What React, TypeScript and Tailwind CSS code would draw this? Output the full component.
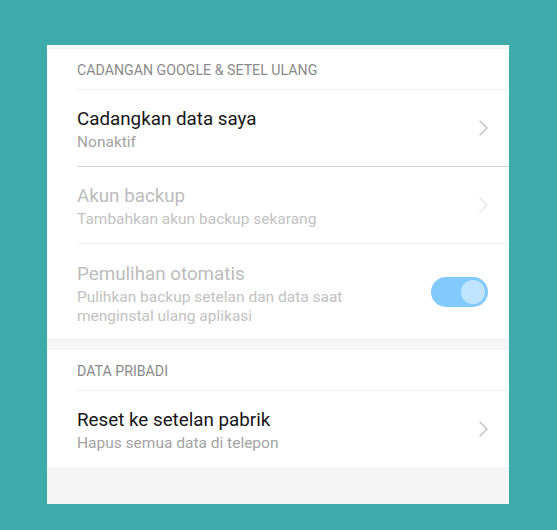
import React from "react";

function Chevron({ faded }: { faded?: boolean }) {
  return (
    <svg width="9" height="16" viewBox="0 0 9 16" fill="none" className={faded ? "text-[#e6e6e6]" : "text-[#bdbdbd]"}>
      <path d="M1 1l7 7-7 7" stroke="currentColor" strokeWidth={1.3} strokeLinecap="round" strokeLinejoin="round" />
    </svg>
  );
}

function Header({ label }: { label: string }) {
  return (
    <div className="h-[40px] flex items-center pt-[4px] text-[14.2px] text-[#8a8a8a]">{label}</div>
  );
}

function Row({ title, subtitle, disabled, className }: { title: string; subtitle: string; disabled?: boolean; className?: string }) {
  return (
    <div className={`flex items-center pr-[21px] ${className ?? ""}`}>
      <div className="flex-1 flex flex-col pt-[6px]">
        <span className={`text-[18.8px] leading-[22px] ${disabled ? "text-[#bcbcbc]" : "text-[#161616]"}`}>{title}</span>
        <span className={`text-[15.5px] leading-[24px] ${disabled ? "text-[#c2c2c2]" : "text-[#a3a3a3]"}`}>{subtitle}</span>
      </div>
      <Chevron faded={disabled} />
    </div>
  );
}

export default function App() {
  return (
    <div className="w-[557px] h-[530px] bg-[#3eabab] pt-[45px] pl-[47px]" style={{ fontFamily: "Roboto, 'Noto Sans', sans-serif" }}>
      <div className="w-[462px] h-[459px] bg-[#f5f5f5] flex flex-col">
        <div className="bg-white">
          <div className="h-[4px] border-b border-[#efefef]" />
          <div className="pl-[30px]">
            <Header label="CADANGAN GOOGLE & SETEL ULANG" />
            <div className="border-t border-[#efefef]">
              <Row title="Cadangkan data saya" subtitle="Nonaktif" className="h-[77px] border-b border-[#d6d6d6]" />
              <Row title="Akun backup" subtitle="Tambahkan akun backup sekarang" disabled className="h-[77px] border-b border-[#f2f2f2]" />
              <div className="h-[95px] flex items-center pr-[21px]">
                <div className="flex-1 flex flex-col pt-[5px]">
                  <span className="text-[18.8px] leading-[22px] text-[#bcbcbc]">Pemulihan otomatis</span>
                  <span className="text-[15.5px] leading-[19px] text-[#c2c2c2] pt-[3px]">
                    Pulihkan backup setelan dan data saat
                    <br />
                    menginstal ulang aplikasi
                  </span>
                </div>
                <div className="w-[57px] h-[30px] rounded-full bg-[#82c9fc] flex items-center justify-end pr-[3px]">
                  <div className="w-[24px] h-[24px] rounded-full bg-[#bfe4fe]" />
                </div>
              </div>
            </div>
          </div>
        </div>
        <div className="h-[11px] border-t border-[#eeeeee]" />
        <div className="bg-white pl-[30px]">
          <Header label="DATA PRIBADI" />
          <div className="border-t border-[#efefef]">
            <Row title="Reset ke setelan pabrik" subtitle="Hapus semua data di telepon" className="h-[76px]" />
          </div>
        </div>
      </div>
    </div>
  );
}
